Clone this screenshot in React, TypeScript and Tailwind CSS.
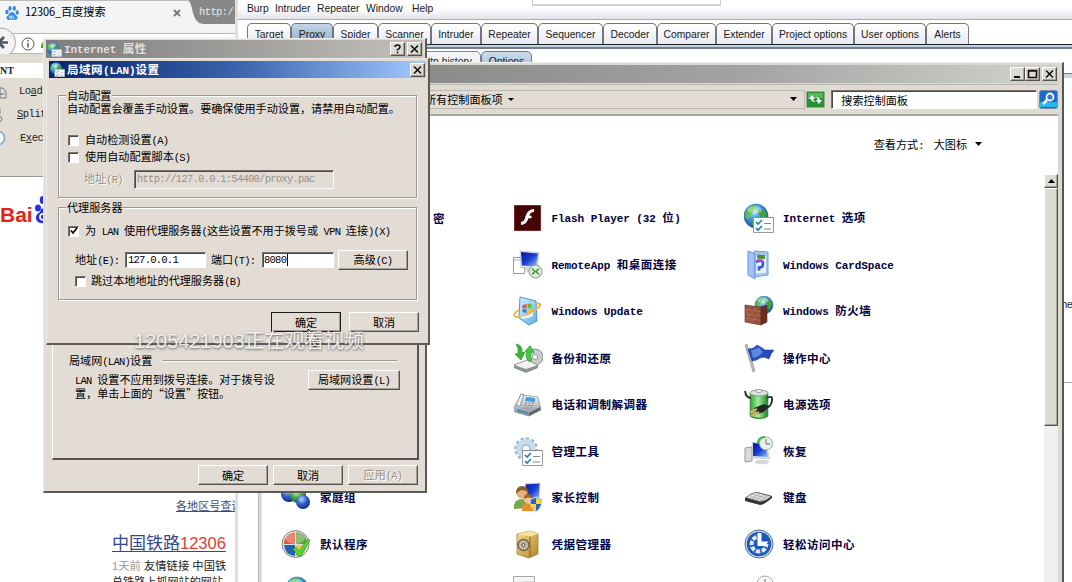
import React from "react";

const cjk = "font-['Noto_Sans_CJK_SC',sans-serif]";
const sans = "font-['Liberation_Sans','Noto_Sans_CJK_SC',sans-serif]";

/* Mixed CJK / Latin run with half-width Latin cells. */
function T({ children, bold = false, className = "" }: { children: string; bold?: boolean; className?: string }) {
  const parts = children.match(/[\x20-\x7e]+|[^\x20-\x7e]+/g) ?? [];
  return (
    <span className={`whitespace-pre pb-[2px] ${cjk} ${bold ? "font-bold" : ""} ${className}`}>
      {parts.map((p, i) =>
        /^[\x20-\x7e]/.test(p) ? (
          <span key={i} className={`font-['Liberation_Mono',monospace] ${bold ? "text-[11px] tracking-[-0.08px]" : "text-[10.5px] tracking-[-0.75px]"}`}>{p}</span>
        ) : (
          <span key={i} className={bold ? "text-[11.5px] tracking-[0.5px]" : "text-[11.1px]"}>{p}</span>
        )
      )}
    </span>
  );
}

const raised = "border border-t-white border-l-white border-r-[#55524e] border-b-[#55524e] shadow-[inset_-1px_-1px_0_#a5a09a]";
const sunken = "border border-t-[#77736e] border-l-[#77736e] border-r-white border-b-white shadow-[inset_1px_1px_0_#4c4a48]";

function Btn({ children, className = "", disabled = false, primary = false }: { children: string; className?: string; disabled?: boolean; primary?: boolean }) {
  return (
    <button className={`flex h-5 shrink-0 items-center justify-center bg-[#e3dcd5] leading-3 ${raised} ${primary ? "outline outline-1 -outline-offset-1 outline-[#1c1c1c]" : ""} ${disabled ? "text-[#96918b] [text-shadow:1px_1px_0_#fff]" : "text-black"} ${className}`}>
      <T>{children}</T>
    </button>
  );
}

function Check({ on = false }: { on?: boolean }) {
  return (
    <span className={`flex h-[11px] w-[11px] shrink-0 items-center justify-center bg-white ${sunken}`}>
      {on && (
        <svg width="8" height="8" viewBox="0 0 8 8"><path d="M1 3.5l2 2.5 4-5" stroke="#000" strokeWidth="1.7" fill="none" /></svg>
      )}
    </span>
  );
}

function CapBtn({ kind }: { kind: "min" | "max" | "close" | "help" }) {
  return (
    <span className={`flex h-[14px] w-[15px] shrink-0 items-center justify-center bg-[#dedad4] ${raised}`}>
      <svg width="11" height="10" viewBox="0 0 11 10" fill="none" stroke="#111" strokeWidth="1.6">
        {kind === "min" && <path d="M2 8h6" strokeWidth="2" />}
        {kind === "max" && <path d="M1.5 1.5h8v7h-8zM1 2h9" />}
        {kind === "close" && <path d="M2 1.5l7 7M9 1.5l-7 7" />}
        {kind === "help" && <path d="M3 3q0-2 2.5-2t2.500 2q0 1.300-2.500 2.700v.8M5.500 7.700v1.600" />}
      </svg>
    </span>
  );
}

function Defs() {
  return (
    <svg width="0" height="0" className="absolute">
      <defs>
        <radialGradient id="globe" cx=".4" cy=".3" r=".75"><stop offset="0" stopColor="#b9ecff" /><stop offset=".45" stopColor="#3a9bdc" /><stop offset="1" stopColor="#0d3f94" /></radialGradient>
        <linearGradient id="screen" x1="0" y1="0" x2="1" y2="1"><stop offset="0" stopColor="#0712a0" /><stop offset=".5" stopColor="#1a3ed0" /><stop offset="1" stopColor="#9cc4fa" /></linearGradient>
        <linearGradient id="metal" x1="0" y1="0" x2="0" y2="1"><stop offset="0" stopColor="#fafafa" /><stop offset="1" stopColor="#8a8f94" /></linearGradient>
        <linearGradient id="gold" x1="0" y1="0" x2="1" y2="1"><stop offset="0" stopColor="#f7dd8c" /><stop offset="1" stopColor="#b58226" /></linearGradient>
        <linearGradient id="green" x1="0" y1="0" x2="1" y2="0"><stop offset="0" stopColor="#2ba332" /><stop offset=".45" stopColor="#a5eba0" /><stop offset="1" stopColor="#188324" /></linearGradient>
        <linearGradient id="glass" x1="0" y1="0" x2="1" y2="1"><stop offset="0" stopColor="#d6f0ff" /><stop offset="1" stopColor="#5fb0e3" /></linearGradient>
        <radialGradient id="ball" cx=".4" cy=".3" r=".7"><stop offset="0" stopColor="#b7d2ff" /><stop offset=".5" stopColor="#3564d0" /><stop offset="1" stopColor="#12297d" /></radialGradient>
        <radialGradient id="gball" cx=".4" cy=".3" r=".7"><stop offset="0" stopColor="#d8f7c9" /><stop offset=".5" stopColor="#4cab4c" /><stop offset="1" stopColor="#1a6b2c" /></radialGradient>
      </defs>
    </svg>
  );
}

function Globe({ cx, cy, r }: { cx: number; cy: number; r: number }) {
  return (
    <g transform={`translate(${cx} ${cy}) scale(${r / 10})`}>
      <circle r="10" fill="url(#globe)" stroke="#2b6ca8" strokeWidth=".6" />
      <path d="M-8-4q3-5 8-5 1 3-2 4 0 3-3 4 0 3-2 4-3-3-1-7z" fill="#62bf43" />
      <path d="M3-6q5 0 6 5-1 5-4 6-2-2-1-5-4-3-1-6zM-3 4q4 0 4 3l-2 2.500q-4-3-2-5.500z" fill="#3fa23a" />
      <ellipse cx="-1" cy="-5" rx="6" ry="3" fill="#fff" opacity=".35" />
    </g>
  );
}

function List() {
  return (
    <g>
      <path d="M9.500 14.500h20v15h-20z" fill="#fff" stroke="#9a9a9a" />
      <path d="M10 14.500h19" stroke="#777" strokeDasharray="1 1" />
      <path d="M12 19l2 2 4-4M12 25l2 2 4-4" stroke="#1a7bb5" strokeWidth="1.600" fill="none" />
      <path d="M20 20.500h7M20 26h7" stroke="#888" />
    </g>
  );
}

function Monitor() {
  return (
    <g>
      <path d="M7 1l19 1.500-2 16-16-1z" fill="#dde5ee" stroke="#a8b2bf" strokeWidth=".6" />
      <path d="M8 2l17 1.500-2 13-14-1z" fill="url(#screen)" />
      <path d="M12 18l8 1 2 4-11-1z" fill="#d5d9de" />
    </g>
  );
}

const icons: Record<string, React.ReactNode> = {
  flash: (
    <g><path d="M1.500 2.500h26v25h-26z" fill="#430707" stroke="#7a2929" /><path d="M21 7.500q-5 0-6.500 5.500-1.500 7-6.500 7.500" stroke="#fff" strokeWidth="3.200" fill="none" /><path d="M12.500 14h6" stroke="#fff" strokeWidth="2.500" /></g>
  ),
  remote: (
    <g><path d="M.5 7.500h11v16h-11z" fill="#fff" stroke="#999" /><path d="M1 10h10" stroke="#aaa" /><Monitor /><circle cx="22.500" cy="21.500" r="6.500" fill="#e6ebe4" stroke="#8b9499" /><path d="M19 18.500l3 3-3 3M26 18.500l-3 3 3 3" stroke="#3a9a35" strokeWidth="1.500" fill="none" /></g>
  ),
  update: (
    <g><path d="M7 1l16 4 1 20-8 4L6 22z" fill="url(#glass)" stroke="#4b96c6" /><path d="M9.500 9l4-1v4l-4 .5z" fill="#e4572e" /><path d="M14.500 8q3-1 4 .5v4l-4-.5z" fill="#76b82a" /><path d="M9.500 13.500l4-.5v4l-4-1z" fill="#3b78cf" /><path d="M14.500 13l4 .5v4l-4-.5z" fill="#f5c22d" /><path d="M6 14q-8 5-3 7 8 1 17-6 9-5 7-7-2-1-5 0" stroke="#efb34c" strokeWidth="1.800" fill="none" /><path d="M7 21q8-1 13-5v4q-5 3-11 2.500z" fill="#fff" opacity=".8" /></g>
  ),
  backup: (
    <g><circle cx="22" cy="14" r="8" fill="#c7ccd0" stroke="#8d8d8d" /><circle cx="22" cy="14" r="2.500" fill="#fff" stroke="#999" /><path d="M1 22l13-5 11 5-12 6z" fill="#f1f1f1" stroke="#999" /><path d="M1 22l12 4 12-4v3l-12 5-12-5z" fill="#8d9298" /><path d="M3 1q7 1 6 9l3-1-4 8-6-6 3-.500q1-5-2-9.500z" fill="#36b831" stroke="#178720" strokeWidth=".6" /><path d="M17 19q-6-4-3-11l-2 .5 5-6 4 7-3-.500q-2 4 1 8z" fill="#47c93c" stroke="#178720" strokeWidth=".6" /></g>
  ),
  phone: (
    <g><path d="M1 18L9 6l16 2 3 13-12 6L2 23z" fill="url(#metal)" stroke="#7e868d" strokeWidth=".7" /><path d="M13 8l9 1v4l-10-1z" fill="#419be1" /><path d="M3 16L8 5l3 .5-4 12z" fill="#edf0f2" stroke="#89939a" /><path d="M12 14h10M11 16.500h10M10 19h10" stroke="#7b8690" strokeDasharray="2 1.500" strokeWidth="1.200" /><path d="M4 20l11 3v2L4 22.500z" fill="#448fba" /><path d="M16 24l11-6v3l-11 6z" fill="#5b6268" /></g>
  ),
  tools: (
    <g><circle cx="13" cy="13" r="10" fill="none" stroke="#8eb5d6" strokeWidth="3.500" strokeDasharray="3 2.200" /><circle cx="13" cy="13" r="7" fill="none" stroke="#c6dced" strokeWidth="6" /><circle cx="13" cy="13" r="4" fill="#fff" stroke="#8aabc7" /><List /></g>
  ),
  family: (
    <g><path d="M12 2l15-1-1 16-12 1z" fill="url(#screen)" stroke="#c8cfda" /><path d="M1 27q-1-10 8-10 6 0 7 9z" fill="#7aa84b" /><circle cx="9" cy="11" r="5.500" fill="#e1b27d" /><path d="M3 12Q3 4 9 4t6.500 7q-3-3-7-3-3 1-5.500 4z" fill="#8b5b24" /><path d="M9 29q0-8 6-8t6 8z" fill="#f08c2c" /><circle cx="15" cy="17.500" r="4" fill="#edc497" /><path d="M11 17q0-5 4-5t4.500 5q-4-3-8.500 0z" fill="#a4651f" /><path d="M23 15l6 2.500q0 9-6 12-6-3-6-12z" fill="#2b62c5" stroke="#e5e5e5" /><path d="M23 16v6h5q1-2 .5-4zM17.500 22H23v7q-4-2-5.500-7z" fill="#fbd436" /></g>
  ),
  safe: (
    <g><path d="M4 5l13-3 8 3v20l-9 4-12-4z" fill="url(#gold)" stroke="#967233" strokeWidth=".7" /><path d="M17 7v21" stroke="#87651f" /><path d="M4 5l13-3 8 3-8 2.500z" fill="#f8e3a4" /><circle cx="10.500" cy="16" r="5.500" fill="#b7aa8b" stroke="#70664c" strokeWidth="1.400" /><circle cx="10.500" cy="16" r="3.500" fill="none" stroke="#efe7d1" strokeDasharray="2 1" /><circle cx="10.500" cy="16" r="1.500" fill="#eee" stroke="#555" /></g>
  ),
  internet: <g><Globe cx={12} cy={13} r={12} /><List /></g>,
  card: (
    <g><path d="M10 1l14 1v23l-14 2z" fill="#a8c8f4" stroke="#6e9be0" /><path d="M12 5l10 .500v17l-10 1z" fill="#e4f0ff" /><path d="M13 4.500l8 .5v4l-8-.5z" fill="#4e923e" /><path d="M12 12q7-3 7 1.500t-4 4v3" stroke="#3158d3" strokeWidth="2.500" fill="none" /><path d="M12 11q4-2 7 0" stroke="#b44bd1" strokeWidth="1.800" fill="none" /><path d="M4 1l7 3v25l-7-4z" fill="#8cb4f2" fillOpacity=".8" stroke="#6795de" /></g>
  ),
  firewall: (
    <g><Globe cx={20} cy={9} r={9} /><path d="M1 9l15 2 7-2v17l-6 3-16-3z" fill="#97513b" stroke="#5e281a" strokeWidth=".6" /><path d="M16.500 11l6.500-2v17l-6.500 3z" fill="#662f20" /><path d="M1 13.500l15.500 2M1 18l15.500 2M1 22l15.500 2.500M5 10v4M11 11v4M3 14v4M8 15v4M14 15v4M5 18.500v4M11 19v4M3 22v4M8 23v4" stroke="#bd7b60" strokeWidth=".6" fill="none" /></g>
  ),
  flag: (
    <g><path d="M1 2l2-1 8 27-2 1z" fill="#b7bcc1" stroke="#777" strokeWidth=".5" /><path d="M4 6q6 0 9-4 4 2 8 5h9q-3 3-5 9-5-3-9-1-4 3-8 3z" fill="#264cbc" stroke="#132f85" strokeWidth=".5" /><path d="M7 7q5 0 7-3 3 2 5 5-4 5-10 6z" fill="#7ba8f0" opacity=".65" /></g>
  ),
  power: (
    <g><ellipse cx="15" cy="27" rx="9" ry="3" fill="#2e8336" /><path d="M6 4h18v23q-9 4-18 0z" fill="url(#green)" stroke="#4f8957" strokeWidth=".6" /><ellipse cx="15" cy="4" rx="9" ry="3" fill="#dce2de" stroke="#8f9b91" /><ellipse cx="15" cy="2" rx="3" ry="1.500" fill="#fff" stroke="#999" /><path d="M1 2q1 7 6 7M23 9q6-3 5 2 0 6-7 9" stroke="#293230" strokeWidth="1.900" fill="none" /><path d="M10 19l10-4 5 2-5 6-7 2z" fill="#20292a" /><path d="M5 24l8-4M7 27l8-4" stroke="#d7ac60" strokeWidth="2" /></g>
  ),
  recover: (
    <g><path d="M1 12l7-1v14l-7 1z" fill="#dadcdd" stroke="#9b9b9b" /><ellipse cx="18" cy="26" rx="7" ry="2.300" fill="#d4d7d9" /><path d="M8 6l14 1 4 16-17-1z" fill="#d9e2ec" stroke="#b4bcc5" strokeWidth=".5" /><path d="M9 7l12 1 3 13-15-1z" fill="url(#screen)" /><circle cx="22" cy="7.500" r="6.500" fill="#e9f2ea" stroke="#99ad9d" /><path d="M22 3v5h4" stroke="#667" fill="none" /><path d="M14 8q0-7 7-7" stroke="#42b240" strokeWidth="2" fill="none" /></g>
  ),
  keyboard: (
    <g><path d="M1 16q7-6 12-6l15 4v2q-8 7-12 7l-15-4z" fill="#343434" /><path d="M2 15.500q7-5 11-5l14 4q-6 5-11 5z" fill="#e0e1e1" stroke="#777" strokeWidth=".5" /><path d="M6 14.500l13 3.500M9 12.500l13 3.500M8 16.500l8-5M12 18l8-5M16 19l8-5" stroke="#9b9e9e" strokeWidth=".6" /></g>
  ),
  ease: (
    <g><circle cx="15" cy="15" r="14" fill="#e0e7ef" stroke="#48698e" /><circle cx="15" cy="15" r="12.300" fill="#1e58b8" /><circle cx="15" cy="15" r="7.500" fill="none" stroke="#dcecff" strokeWidth="4" strokeDasharray="35.300 11.800" /><circle cx="15" cy="15" r="7.500" fill="none" stroke="#1e58b8" strokeWidth="4.500" strokeDasharray="1.500 4.390" strokeDashoffset="-3" /><path d="M13.500 4h4v8.500h7L21 17h-7.500z" fill="#fff" /></g>
  ),
  home: (
    <g><circle cx="8" cy="12" r="8" fill="url(#ball)" /><circle cx="17" cy="13" r="8" fill="url(#gball)" /><circle cx="22" cy="20" r="7" fill="url(#ball)" /></g>
  ),
  defaults: (
    <g><circle cx="14.500" cy="15" r="13.500" fill="#d9dfe0" stroke="#888" /><path d="M14 3v12H3Q3 5 14 3z" fill="#e35133" /><path d="M15 3q11 1 11 12H15z" fill="#5e9f3b" /><path d="M3 16h11v11Q4 26 3 16z" fill="#1e61b5" /><path d="M15 16h11q-1 10-11 11z" fill="#f3cc37" /><ellipse cx="14" cy="9" rx="10" ry="6" fill="#fff" opacity=".3" /><path d="M12 20l3-2 3 4 9-12 2 1-9 16h-3z" fill="#54d536" stroke="#239422" strokeWidth=".6" /></g>
  ),
  sync: <g><Globe cx={16} cy={13} r={11} /></g>,
  panel: <g><path d="M.5 1.500h21v20h-21z" fill="#f5f5f5" stroke="#aaa" /><path d="M11 6h9v12h-9z" fill="#ddd" /></g>,
  clock: <g><circle cx="21" cy="9" r="8" fill="#f4f7f7" stroke="#aab" /><path d="M21 4v5" stroke="#677" /></g>,
  none: null,
};

function Icon({ name, size = 30 }: { name: string; size?: number }) {
  return <svg className="shrink-0" width={size} height={size} viewBox="0 0 30 30">{icons[name]}</svg>;
}

const rows: [string, string][][] = [
  [["none", "密"], ["flash", "Flash Player (32 位)"], ["internet", "Internet 选项"]],
  [["none", ""], ["remote", "RemoteApp 和桌面连接"], ["card", "Windows CardSpace"]],
  [["none", ""], ["update", "Windows Update"], ["firewall", "Windows 防火墙"]],
  [["none", ""], ["backup", "备份和还原"], ["flag", "操作中心"]],
  [["none", ""], ["phone", "电话和调制解调器"], ["power", "电源选项"]],
  [["none", ""], ["tools", "管理工具"], ["recover", "恢复"]],
  [["home", "家庭组"], ["family", "家长控制"], ["keyboard", "键盘"]],
  [["defaults", "默认程序"], ["safe", "凭据管理器"], ["ease", "轻松访问中心"]],
  [["sync", ""], ["panel", ""], ["clock", ""]],
];

function Browser() {
  return (
    <section className="absolute left-0 top-0 flex h-[582px] w-[236px] flex-col overflow-hidden bg-white">
      <div className="flex h-[33px] shrink-0 bg-[#f4f4f4]">
        <div className="flex h-6 w-[188px] items-center border-t border-[#bbb] pl-[5px]">
          <svg width="14" height="14" viewBox="0 0 14 14" fill="#3487e2"><ellipse cx="2" cy="6" rx="1.700" ry="2.300" /><ellipse cx="5" cy="2.400" rx="1.600" ry="2.300" /><ellipse cx="9.300" cy="2.400" rx="1.600" ry="2.300" /><ellipse cx="12.200" cy="6.500" rx="1.600" ry="2.300" /><path d="M7 6q2 0 3.500 3 3 2 1.500 4-1 1.500-5 .6-4 .9-5-.6-1.500-2 1.500-4Q5 6 7 6z" /><path d="M4.500 10h2v2h-2zM8 9.500V12h2" stroke="#fff" fill="none" strokeWidth=".8" /></svg>
          <span className={`pb-[3px] pl-[6px] text-[11.100px] leading-4 text-black ${cjk}`}><span className="tracking-[-0.150px]">12306_</span>百度搜索</span>
          <svg className="ml-auto mr-[7px]" width="8" height="8" viewBox="0 0 8 8"><path d="M1 1l6 6M7 1L1 7" stroke="#777" strokeWidth="1.800" /></svg>
        </div>
        <svg width="48" height="25" viewBox="0 0 48 25">
          <path d="M0 0h48v24H15Q8 24 5 13 3 2 0 0z" fill="#878787" />
          <text x="11" y="15" fontSize="10.500" fill="#e8e8e8" fontFamily="Liberation Mono" letterSpacing="-.6">http:/</text>
        </svg>
      </div>
      <div className="flex h-[21px] shrink-0 items-center border-y border-[#b4b4b4] bg-white">
        <svg className="-mt-1 h-[31px] w-[17px] shrink-0 overflow-visible" viewBox="0 0 17 31"><circle cx="1" cy="16.500" r="14.500" fill="#f3f3f3" stroke="#a5a5a5" /><path d="M8 16.500H-2M4 11l-5.500 5.500L4 22" stroke="#4d565e" strokeWidth="2.700" fill="none" /></svg>
        <svg className="ml-1" width="14" height="14" viewBox="0 0 14 14"><circle cx="7" cy="7" r="6" fill="#fff" stroke="#555" /><path d="M7 6v4.500M7 3v1.500" stroke="#444" strokeWidth="1.300" /></svg>
        <span className="ml-[6px] h-[9px] w-3 rounded-tl-lg bg-[#4c9a25]" />
      </div>
      <div className="flex h-[123px] shrink-0 flex-col border-b border-[#9b9893] bg-[#e1dcd4] pt-[9px] text-[#222] font-['Liberation_Mono',monospace]">
        <div className="h-[15px] shrink-0 bg-white font-['Liberation_Serif',serif] text-[10px] font-bold leading-[15px]">NT</div>
        <div className="flex h-[23px] items-center pt-[5px] text-[10.500px] tracking-[-0.500px]"><svg width="19" height="15"><path d="M0 3h3l3 4v6H0z" fill="#ddd" stroke="#777" /><path d="M0 9h4" stroke="#666" /></svg><span>Lo<u>a</u>d URL</span></div>
        <div className="flex h-[23px] items-center pt-[5px] text-[10.500px] tracking-[-0.500px]"><svg width="17" height="15"><path d="M0 0v6" stroke="#88a" /><circle cx="-.5" cy="11" r="2.500" fill="none" stroke="#777" /></svg><span><u>S</u>plit</span></div>
        <div className="flex h-[23px] items-center pt-[6px] text-[10.500px] tracking-[-0.500px]"><svg width="20" height="15"><circle cx="-2" cy="7" r="6.500" fill="#fff" stroke="#8bb2d6" strokeWidth="2" /></svg><span>E<u>x</u>ec</span></div>
      </div>
      <div className="flex h-[50px] shrink-0 items-end">
        <span className={`w-[34px] shrink-0 text-[21px] font-bold leading-[24px] text-[#e52218] ${sans}`}>Bai</span>
        <svg width="20" height="32" viewBox="0 0 20 32" fill="#2932e1"><ellipse cx="4" cy="13" rx="3" ry="3.500" /><ellipse cx="8.500" cy="5" rx="2.700" ry="4" /><path d="M10 13q-3 0-4 4-5 3-4 7 1 5 9 4z" /><path d="M11 19q-5-1-5 3t5 2" stroke="#fff" strokeWidth="1.800" fill="none" /></svg>
      </div>
      <div className={`mt-[271px] flex flex-col whitespace-nowrap ${sans}`}>
        <a className="ml-[176px] h-4 text-[11.100px] leading-4 text-[#3c4d83] underline">各地区号查询</a>
        <a className="ml-[112px] mt-[17px] h-6 text-[17px] leading-6 text-[#34478a] underline underline-offset-2">中国铁路<span className="text-[16.500px] text-[#e03d35]">12306</span></a>
        <p className="ml-[112px] mt-[3px] h-4 text-[11.300px] leading-4 text-[#222]"><span className="text-[#999]">1天前</span> 友情链接 中国铁</p>
        <p className="ml-[112px] text-[11.100px] leading-4 text-[#222]">总铁路上抓网站的网站</p>
      </div>
    </section>
  );
}

const burpTabs: { name: string; w: string; active?: boolean }[] = [
  { name: "Target", w: "w-[44px]" }, { name: "Proxy", w: "w-[42px]", active: true }, { name: "Spider", w: "w-[45px]" },
  { name: "Scanner", w: "w-[53px]" }, { name: "Intruder", w: "w-[50px]" }, { name: "Repeater", w: "w-[57px]" },
  { name: "Sequencer", w: "w-[65px]" }, { name: "Decoder", w: "w-[54px]" }, { name: "Comparer", w: "w-[59px]" },
  { name: "Extender", w: "w-[56px]" }, { name: "Project options", w: "w-[82px]" }, { name: "User options", w: "w-[72px]" }, { name: "Alerts", w: "w-[43px]" },
];

function Burp() {
  return (
    <section className={`absolute left-[235px] top-0 flex h-[582px] w-[837px] flex-col border-l-[3px] border-[#dfdfdf] bg-white text-[10.300px] text-[#202020] ${sans}`}>
      <nav className="flex h-5 shrink-0 items-start border-b border-[#a9abaf] bg-gradient-to-b from-white from-40% to-[#e3e5ea] pl-[9px] leading-[18px]">
        <span className="w-7">Burp</span><span className="w-[42px]">Intruder</span><span className="w-[49px]">Repeater</span><span className="w-[46px]">Window</span><span className="w-[30px]">Help</span>
        <span className="ml-[90px] h-[6px] w-[189px] border-x border-b-2 border-[#d0d0d0] bg-white" />
      </nav>
      <div className="flex h-6 shrink-0 items-end pl-[9px]">
        {burpTabs.map((t) => (
          <span key={t.name} className={`flex h-[21px] shrink-0 items-center justify-center rounded-t-[5px] border border-b-0 border-[#73777d] pt-px ${t.w} ${t.active ? "bg-gradient-to-b from-[#c3d6e6] to-[#91adc6]" : "bg-gradient-to-b from-white to-[#e7eaf2]"}`}>{t.name}</span>
        ))}
      </div>
      <div className="h-[5px] shrink-0 border-b-2 border-t border-b-[#777e89] border-t-[#222] bg-[#bed4e6]" />
      <div className="flex h-6 shrink-0 items-start pl-[150px] pt-[2px]">
        <span className="h-5 w-[93px] rounded-t-[5px] border border-[#888] bg-[#f2f4f8] pr-2 text-right leading-5">http history</span>
        <span className="h-5 w-[51px] rounded-t-[5px] border border-[#677889] bg-gradient-to-b from-[#c9dceb] to-[#a6c1d7] text-center leading-5">Options</span>
      </div>
      <div className="flex h-[310px] shrink-0 items-end justify-end border-y border-t-[#777e89] border-b-[#aaa] shadow-[inset_0_4px_0_#c6d7e6]">
        <span className="mb-[69px] w-[13px] leading-4 tracking-[-0.300px]">the</span>
      </div>
    </section>
  );
}

function ControlPanel() {
  return (
    <section className="absolute left-[258px] top-[62px] flex h-[530px] w-[806px] flex-col border border-t-[#efefed] border-l-[#bcbcb9] border-r-2 border-r-[#565656] bg-[#dcd9d2] pl-[2px] pr-1 pt-[2px]">
      <header className="flex h-[18px] shrink-0 items-center justify-end bg-gradient-to-r from-[#7e7e7e] via-[#a3a4a2] via-60% to-[#d2d2ce] pr-px">
        <CapBtn kind="min" /><CapBtn kind="max" /><span className="w-[2px]" /><CapBtn kind="close" />
      </header>
      <div className="mt-px flex h-8 shrink-0 items-center border-b-2 border-t border-b-[#aaa8a3] border-t-[#b9b6b0] bg-[#dfdbd3] leading-4">
        <div className="flex h-[19px] w-[545px] items-center border border-[#bdb8b0] bg-[#e3dcd5] pl-[163px]">
          <T className="pb-[4px]">所有控制面板项</T><svg className="ml-[5px]" width="6" height="4"><path d="M0 0h6L3 3z" /></svg>
          <svg className="ml-auto mr-[7px]" width="7" height="5"><path d="M0 0h7L3.500 4z" /></svg>
        </div>
        <svg className="ml-[1px]" width="19" height="17" viewBox="0 0 19 17"><rect x=".5" y=".5" width="18" height="16" rx="1" fill="#26942f" stroke="#9ca79b" /><path d="M2 8V2h15v5q-7-1-15 1z" fill="#80c878" opacity=".6" /><path d="M3 8l3-4 3 4H7q0 2 3 3-5 0-5-3zM16 9l-3 4-3-4h2q0-2-3-3 5 0 5 3z" fill="#fff" /></svg>
        <div className={`ml-[6px] flex h-[19px] w-[206px] items-center bg-white pl-[9px] ${sunken}`}><T>搜索控制面板</T></div>
        <svg className="ml-[2px]" width="19" height="19" viewBox="0 0 19 19"><rect x=".5" y=".5" width="18" height="18" rx="2" fill="#1c69cf" stroke="#788da5" /><path d="M1 12h17v5H1z" fill="#27b5f2" /><circle cx="11" cy="7" r="3.500" fill="#3a78d2" stroke="#fff" strokeWidth="1.800" /><path d="M8 10l-4 4" stroke="#fff" strokeWidth="2.500" /></svg>
      </div>
      <div className="flex h-[466px] bg-white">
        <div className="flex w-[783px] shrink-0 flex-col border-l border-[#e2e2df]">
          <div className="flex h-[79px] shrink-0 items-start justify-end pr-[62px] pt-[18px] leading-4"><T>查看方式:</T><T className="ml-[10px]">大图标</T><svg className="ml-2 mt-[8px]" width="7" height="5"><path d="M0 0h7L3.500 4z" /></svg></div>
          <div className="grid shrink-0 auto-rows-[46.500px] grid-cols-[231.500px_231.500px_231.500px] pl-[19px]">
            {rows.flat().map(([icon, label], i) => (
              <div key={i} className="flex items-center gap-[9px] leading-4 text-[#00003f]">
                <Icon name={icon} /><T bold className={i === 0 ? "ml-[113px]" : ""}>{label}</T>
              </div>
            ))}
          </div>
        </div>
        <div className="mt-[58px] flex w-[15px] flex-col bg-[#efefec]">
          <div className={`flex h-[14px] shrink-0 items-center justify-center bg-[#dcdbd4] ${raised}`}><svg width="7" height="4"><path d="M0 4h7L3.500 0z" /></svg></div>
          <div className={`h-[238px] shrink-0 bg-[#dcdcd4] ${raised}`} />
          <div className="flex-1 bg-[#f0f0ee]" />
        </div>
      </div>
    </section>
  );
}

function TitleIcon() {
  return <Icon name="internet" size={15} />;
}

const frame = "border border-t-[#eeeae5] border-l-[#eeeae5] border-r-2 border-b-2 border-r-[#5c5a58] border-b-[#5c5a58] bg-[#e3dcd5]";

function InternetProps() {
  return (
    <section className={`absolute left-[43px] top-[38px] flex h-[455px] w-[384px] flex-col text-black ${frame}`}>
      <header className="mx-[2px] mt-px flex h-[18px] shrink-0 items-center bg-gradient-to-r from-[#7d7d7d] to-[#c3c0ba] pl-px pr-px text-[#e3dfda]">
        <TitleIcon /><T bold className="ml-[2px] leading-4">Internet 属性</T>
        <span className="ml-auto flex gap-[2px]"><CapBtn kind="help" /><CapBtn kind="close" /></span>
      </header>
      <div className="ml-2 mt-[6px] flex h-[396px] w-[367px] shrink-0 flex-col justify-end border border-b-2 border-r-2 border-white border-b-[#55534f] border-r-[#55534f] pb-[59px] pl-4">
        <div className="flex h-4 items-center leading-4"><T>局域网(LAN)设置</T><span className="ml-[11px] h-[2px] w-[234px] border-b border-t border-b-white border-t-[#99958f]" /></div>
        <div className="mt-px flex h-[29px] items-start pl-[6px]">
          <p className="flex w-[233px] shrink-0 flex-col pt-[2px] leading-[10px]"><T>LAN 设置不应用到拨号连接。对于拨号设</T><span className={`flex text-[11.100px] ${cjk}`}>置，单击上面的<span className="w-[11px] text-right">“</span>设置<span className="w-[11px]">”</span>按钮。</span></p>
          <Btn className="w-[92px]">局域网设置(L)</Btn>
        </div>
      </div>
      <footer className="mt-[5px] flex justify-end gap-[5px] pr-[7px]"><Btn className="w-[70px]">确定</Btn><Btn className="w-[70px]">取消</Btn><Btn disabled className="w-[70px]">应用(A)</Btn></footer>
    </section>
  );
}

const group = "mx-auto block w-[359px] min-w-0 border border-[#9b9690] px-[8px] shadow-[1px_1px_0_#fff,inset_1px_1px_0_#fff]";

function LanDialog() {
  return (
    <section className={`absolute left-[46px] top-[58px] flex h-[287px] w-[384px] flex-col text-black ${frame}`}>
      <header className="mx-[2px] mt-[2px] flex h-[17px] shrink-0 items-center bg-gradient-to-r from-[#08246b] via-[#3b63ae] via-50% to-[#a4caff] pl-px pr-px text-white">
        <TitleIcon /><T bold className="ml-[2px] leading-4">局域网(LAN)设置</T><span className="ml-auto"><CapBtn kind="close" /></span>
      </header>
      <fieldset className={`mt-[11px] h-[109px] ${group}`}>
        <legend className="-ml-px h-3 bg-[#e3dcd5] px-px text-[11.100px] leading-3"><T>自动配置</T></legend>
        <div className="flex h-4 items-center leading-4"><T className="pb-[4px]">自动配置会覆盖手动设置。要确保使用手动设置，请禁用自动配置。</T></div>
        <label className="mt-[15px] flex h-4 items-center gap-[6px] pl-px leading-4"><Check /><T>自动检测设置(A)</T></label>
        <label className="mt-px flex h-4 items-center gap-[6px] pl-px leading-4"><Check /><T>使用自动配置脚本(S)</T></label>
        <div className="mt-1 flex h-5 items-center pl-[17px] leading-4 text-[#96918b]"><T className="w-[50px] shrink-0 [text-shadow:1px_1px_0_#fff]">地址(R)</T><span className={`flex h-[19px] w-[200px] items-center pl-[2px] ${sunken}`}><T className="pb-[4px]">http://127.0.0.1:54400/proxy.pac</T></span></div>
      </fieldset>
      <fieldset className={`mt-[3px] h-[99px] ${group}`}>
        <legend className="-ml-px h-3 bg-[#e3dcd5] px-px text-[11.100px] leading-3"><T>代理服务器</T></legend>
        <label className="mt-[10px] flex h-4 items-center gap-[6px] pl-px leading-4"><Check on /><T>为 LAN 使用代理服务器(这些设置不用于拨号或 VPN 连接)(X)</T></label>
        <div className="mt-[11px] flex h-5 items-center pl-2 leading-4">
          <T className="w-[50px] shrink-0">地址(E):</T><span className={`flex h-4 w-[81px] items-center bg-white pl-[2px] ${sunken}`}><T className="pb-[4px]">127.0.0.1</T></span>
          <T className="ml-[5px] w-[51px] shrink-0">端口(T):</T><span className={`flex h-4 w-[72px] items-center bg-white pl-px ${sunken}`}><T className="pb-[4px]">8080</T><span className="ml-px h-3 w-px bg-black" /></span>
          <Btn className="ml-1 w-[70px]">高级(C)</Btn>
        </div>
        <label className="mt-[3px] flex h-4 items-center gap-[5px] pl-2 leading-4"><Check /><T>跳过本地地址的代理服务器(B)</T></label>
      </fieldset>
      <footer className="mt-3 flex justify-end gap-2 pr-[9px]"><Btn primary className="w-[70px]">确定</Btn><Btn className="w-[70px]">取消</Btn></footer>
    </section>
  );
}

export default function App() {
  return (
    <main className="relative h-[582px] w-[1072px] overflow-hidden bg-white">
      <Defs />
      <Browser />
      <Burp />
      <ControlPanel />
      <InternetProps />
      <LanDialog />
      <svg className="absolute left-[307px] top-[328px]" width="14" height="21" viewBox="0 0 14 21"><path d="M1 1v15l3.500-3.500L7 19l3-1-2.500-6H12z" fill="#fff" stroke="#111" /></svg>
      <p className={`absolute left-[134px] top-[329px] whitespace-nowrap text-[19.900px] leading-6 text-[#f5f4f2] opacity-90 [text-shadow:0_1px_2px_#555a,1px_1px_3px_#6668] ${sans}`}>1205421903正在观看视频</p>
    </main>
  );
}
